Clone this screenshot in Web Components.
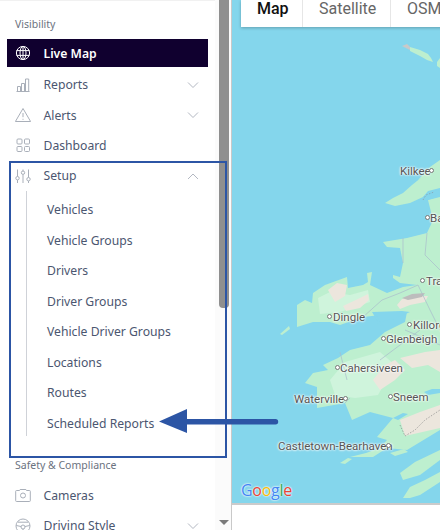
<!DOCTYPE html>
<html lang="en"><head><meta charset="utf-8"><title>Live Map</title>
<style>
html,body{margin:0;padding:0;width:440px;height:530px;overflow:hidden;background:#fff}
body{font-family:"Noto Sans","Open Sans",sans-serif}
app-shell{width:440px;height:530px}
</style></head>
<body>
<app-shell>
  <side-bar slot="side">
    <nav-label>Visibility</nav-label>
    <nav-item icon="globe" active>Live Map</nav-item>
    <nav-item icon="bars" chevron="down">Reports</nav-item>
    <nav-item icon="alert" chevron="down">Alerts</nav-item>
    <nav-item icon="grid">Dashboard</nav-item>
    <nav-item icon="sliders" chevron="up">Setup</nav-item>
    <sub-nav>
      <sub-item>Vehicles</sub-item>
      <sub-item>Vehicle Groups</sub-item>
      <sub-item>Drivers</sub-item>
      <sub-item>Driver Groups</sub-item>
      <sub-item>Vehicle Driver Groups</sub-item>
      <sub-item>Locations</sub-item>
      <sub-item>Routes</sub-item>
      <sub-item>Scheduled Reports</sub-item>
    </sub-nav>
    <nav-label class="gap">Safety &amp; Compliance</nav-label>
    <nav-item icon="camera">Cameras</nav-item>
    <nav-item icon="wheel" chevron="down">Driving Style</nav-item>
  </side-bar>
  <map-panel slot="main">
    <map-label x="400" y="171" dot="431">Kilkee</map-label>
    <map-label x="430" y="218" dot="427">Ba</map-label>
    <map-label x="426" y="281" dot="422">Tra</map-label>
    <map-label x="333" y="317" dot="329">Dingle</map-label>
    <map-label x="413" y="325" dot="409">Killorg</map-label>
    <map-label x="386" y="339" dot="383">Glenbeigh</map-label>
    <map-label x="340" y="368" dot="337">Cahersiveen</map-label>
    <map-label x="294" y="399" dot="345">Waterville</map-label>
    <map-label x="393" y="397" dot="390">Sneem</map-label>
    <map-label x="278" y="446" dot="388">Castletown-Bearhaven</map-label>
  </map-panel>
  <call-out slot="over"></call-out>
</app-shell>
<script>
const ICONS={
globe:'<circle cx="8" cy="8" r="6.6"/><ellipse cx="8" cy="8" rx="3" ry="6.6"/><path d="M1.6 5.6h12.8M1.6 10.4h12.8M8 1.4v13.2"/>',
bars:'<path d="M1.5 14.5h13M2.5 14.5v-5h3v5M6.5 14.5V6.5h3v8M10.5 14.5V2h3.2v12.5"/>',
alert:'<path d="M8 1.5 15.6 14.5H.4z" stroke-linejoin="round"/><path d="M8 6v4.2M8 11.8v1"/>',
grid:'<rect x="2" y="2" width="5" height="5" rx="1"/><rect x="9.5" y="2" width="5" height="5" rx="1"/><rect x="2" y="9.5" width="5" height="5" rx="1"/><rect x="9.5" y="9.5" width="5" height="5" rx="1"/>',
sliders:'<path d="M2.5 1.5v7M2.5 12v3M8 1.5v1.5M8 6.5v8.5M13.5 1.5v8M13.5 13v2"/><circle cx="2.5" cy="10.2" r="1.7"/><circle cx="8" cy="4.7" r="1.7"/><circle cx="13.5" cy="11.2" r="1.7"/>',
camera:'<path d="M1.5 3.5h3l.6-1h5.800l.6 1h3a.8.8 0 0 1 .8.8v9.400a.8.8 0 0 1-.8.8h-13a.8.8 0 0 1-.8-.8V4.300a.8.8 0 0 1 .8-.8z"/><circle cx="8" cy="8.500" r="2.500"/>',
wheel:'<circle cx="8" cy="8" r="7"/><circle cx="8" cy="9" r="2"/><path d="M1.300 7.500 6 8.500M14.700 7.500 10 8.500M8 11v4M3 4.200h10"/>'
};
const chev=d=>`<svg width="14" height="8" viewBox="0 0 14 8" fill="none" stroke="#b3b8c2" stroke-width="1"><path d="${d==='up'?'M2 7 7 2l5 5':'M2 1.500 7 6.500l5-5'}"/></svg>`;
function def(name,css,html){
  customElements.define(name,class extends HTMLElement{
    constructor(){super();const s=this.attachShadow({mode:'open'});
      s.innerHTML=`<style>${css}</style>`+(typeof html==='function'?html(this):html);}
  });
}
def('app-shell',`
  :host{display:block;position:relative;overflow:hidden;background:#fff}
  .row{display:flex;height:100%}
`,`<div class="row"><slot name="side"></slot><slot name="main"></slot></div><slot name="over"></slot>`);
def('side-bar',`
  :host{display:flex;width:231px;height:530px;flex:none;overflow:hidden;box-shadow:inset 0 1px 0 #f1f1f1}
  .content{width:215px;flex:none;box-sizing:border-box;padding:14px 7px 0;overflow:hidden;color:#4b5670;}
  .track{width:16px;flex:none;background:#fbfbfb;display:flex;flex-direction:column;align-items:flex-start;padding-left:4px;box-sizing:border-box}
  .thumb{width:9.500px;height:308px;background:#8f8f8f;border-radius:0 0 4px 4px}
  .arrow{margin-top:auto;margin-bottom:5px;width:0;height:0;border-left:5px solid transparent;border-right:5px solid transparent;border-top:5px solid #7a7a7a}
`,`<div class="content"><slot></slot></div><div class="track"><div class="thumb"></div><div class="arrow"></div></div>`);
def('nav-label',`
  :host{display:block;height:20px;line-height:20px;font-size:10.500px;color:#6b7280;padding-left:8px;margin-bottom:5px}
  :host(.gap){margin-top:19px}
`,`<slot></slot>`);
def('nav-item',`
  :host{display:flex;align-items:center;height:30.400px;font-size:12.200px;color:#4b5670;position:relative;white-space:nowrap}
  :host([active]){height:28px;background:#10002f;color:#fff;font-weight:600;margin-bottom:2.500px;width:201px}
  .ic{width:16px;height:16px;margin-left:8px;margin-right:12.500px;flex:none;fill:none;stroke:#a9afb9;stroke-width:1}
  :host([active]) .ic{stroke:#fff}
  .t{flex:1}
  .c{width:14px;height:8px;margin-right:8px;display:flex}
`,el=>{
  const ic=el.getAttribute('icon'),c=el.getAttribute('chevron');
  return `<svg class="ic" viewBox="0 0 16 16">${ICONS[ic]}</svg><span class="t"><slot></slot></span>${c?`<span class="c">${chev(c)}</span>`:''}`;
});
def('sub-nav',`
  :host{display:block;margin-left:18.500px;padding-top:4px;border-left:1px solid #cfd2d8;height:245px;box-sizing:border-box}
`,`<slot></slot>`);
def('sub-item',`
  :host{display:block;height:30.500px;line-height:30.500px;font-size:12.200px;color:#4b5670;padding-left:20.500px;white-space:nowrap}
`,`<slot></slot>`);
def('map-tabs',`
  :host{position:absolute;left:9px;top:0;display:flex;height:27px;background:#fff;box-shadow:0 1px 3px rgba(0,0,0,.25);font:16px Roboto,sans-serif;color:#666}
  span{display:block;box-sizing:border-box;line-height:18px;padding:0 0 0 16px;border-right:1px solid #e6e6e6;white-space:nowrap}
  .a{width:62px}.b{width:88px}.c{width:60px;border:0}
  .on{color:#111;font-weight:500}
`,`<span class="a on">Map</span><span class="b">Satellite</span><span class="c">OSM</span>`);
def('google-logo',`
  :host{position:absolute;left:9px;top:480px;font:500 16px/20px "Open Sans",Roboto,sans-serif;letter-spacing:-.3px;text-shadow:0 0 2px #fff,0 0 2px #fff}
  b{font-weight:500}
`,`<b style="color:#4285f4">G</b><b style="color:#ea4335">o</b><b style="color:#fbbc05">o</b><b style="color:#4285f4">g</b><b style="color:#34a853">l</b><b style="color:#ea4335">e</b>`);
def('map-label',`
  :host{position:absolute;display:block;font:11.500px/14px Roboto,sans-serif;color:#555;white-space:nowrap;text-shadow:0 0 2px #fff,0 0 2px #fff,0 0 3px #fff}
  i{position:absolute;width:3px;height:3px;border:1px solid #777;background:#fff;border-radius:50%;top:4px}
`,el=>{
  const x=+el.getAttribute('x'),y=+el.getAttribute('y'),d=+el.getAttribute('dot');
  el.style.left=(x-232)+'px';el.style.top=(y-7)+'px';
  return `<slot></slot><i style="left:${d-x-2}px"></i>`;
});
def('map-panel',`
  :host{display:block;position:relative;width:209px;height:530px;flex:none;box-sizing:border-box;border-left:1px solid #c9c9c9;overflow:hidden;background:#fff}
  .map{position:absolute;left:0;top:0;width:208px;height:503px;background:#84d6ec;border-bottom:2px solid #cbcbcb;overflow:hidden}
  svg{position:absolute;left:0;top:0;filter:blur(.6px)}
`,`<div class="map">
<svg width="208" height="503" viewBox="232 0 208 503">
 <g fill="#bdefcf">
  <path d="M410 47 420 50 428 54 431 58 433 62 427 60 420 56 410 51z"/>
  <path d="M440 58 437 62 437 66 440 68z"/>
  <path d="M385 203 393 198 403 193 412 185 422 177 418 180 430 167 440 160V188L428 191 423 197 410 203 395 206z"/>
  <path d="M440 196 428 200 433 220 427 233 407 238 383 242 387 247 400 248 403 263 400 277 393 275 393 278 400 283 417 285 403 287 387 293 370 285 372 272 367 273 368 282 363 285 348 288 347 277 325 285 313 293 312 303 305 300 297 305 297 327 313 322 330 322 340 325 363 317 407 312 405 322 385 332 370 345 350 350 338 358 323 365 328 370 313 373 305 383 317 387 317 408 345 403 352 420 370 412 393 418 377 437 387 440 380 448 366 453 350 457 373 457 387 448 407 450 440 430V196z"/>
  <path d="M400 473 415 462 440 450V460L420 475 403 480z"/>
  <path d="M403 498 410 487 425 480 440 472V482L420 495 410 498z"/>
  <path d="M340 463 348 458 352 459 345 464z"/>
  <path d="M280 334 289 326 290 329 282 335z"/>
  <path d="M390 453 404 449 408 452 395 456z"/>
 </g>
 <g fill="#84d6ec">
  <path d="M423 197 430 192 440 190V197L428 200z"/>
  <path d="M393 418 403 413 408 414 398 420z"/>
  <path d="M424 392 432 389 440 389V393L428 395z"/>
  <path d="M372 312 402 311 410 312 394 319 378 322z"/>
  <path d="M376 315 381 323 384 327 378 325z"/>
  <path d="M371 381 378 379 380 383 372 385z"/>
 </g>
 <g fill="#cff4dc">
  <path d="M318 298 330 292 350 295 368 290 370 302 340 312 320 314z"/>
  <path d="M345 362 380 352 395 365 378 395 355 398 335 395 330 380z"/>
 </g>
 <g fill="#ece6dd">
  <path d="M328 290 337 283 347 285 345 296 335 302z"/>
  <path d="M343 306 360 298 368 294 369 300 360 308 346 311z"/>
  <path d="M397 305 402 299 415 296 428 296 425 302 410 305 400 309z"/>
  <path d="M385 365 395 360 405 370 395 380 380 390 373 380z"/>
  <path d="M400 358 425 352 440 350V372L428 365 412 368z"/>
  <path d="M400 420 420 412 440 405V428L405 436z"/>
 </g>
 <path d="M402 298 412 294 425 293 422 297 408 300z" fill="#bdbdbd"/>
 <path d="M402 46 407 44 410 47 410 50z" fill="#c9c9c9"/>
 <g fill="none" stroke="#a9bccb" stroke-width=".7">
  <path d="M363 317 382 300 400 293 418 285M418 285 430 310 440 330M403 238 403 263M427 233 425 255 440 270M420 330 400 345 380 360M347 380 340 352M345 403 350 398M405 330 440 345"/>
 </g>
 <path d="M423 200 426 195 434 192" fill="none" stroke="#8b9aa8" stroke-width=".7" stroke-dasharray="1.500 1.500"/>
 <path d="M400 425 405 436 415 430 425 420 440 410" fill="none" stroke="#8b8b8b" stroke-width=".7" stroke-dasharray="1.500 1.500"/>
</svg>
</div><map-tabs></map-tabs><slot></slot><google-logo>Google</google-logo>`);
def('call-out',`
  :host{position:absolute;inset:0;display:block;pointer-events:none}
  .box{position:absolute;left:9px;top:161px;width:218px;height:297px;box-sizing:border-box;border:2px solid #2c55a5}
  svg{position:absolute;left:155px;top:405px}
`,`<div class="box"></div><svg width="126" height="32" viewBox="155 405 126 32"><path d="M159 421.500 187 409V419h88.500a2.700 2.700 0 0 1 0 5.400H187V433z" fill="#2c55a5"/></svg>`);
</script>
</body></html>
